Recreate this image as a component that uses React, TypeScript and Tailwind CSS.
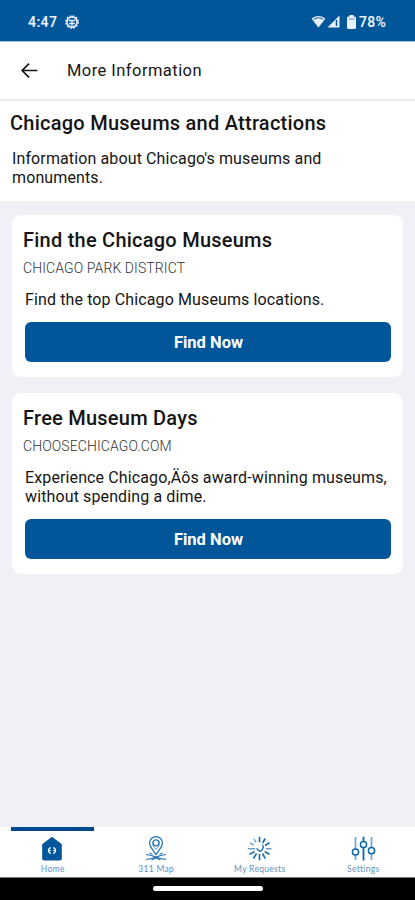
import React from "react";

interface Resource {
  title: string;
  source: string;
  description: string;
}

const RESOURCES: Resource[] = [
  {
    title: "Find the Chicago Museums",
    source: "CHICAGO PARK DISTRICT",
    description: "Find the top Chicago Museums locations.",
  },
  {
    title: "Free Museum Days",
    source: "CHOOSECHICAGO.COM",
    description:
      "Experience Chicago,Äôs award-winning museums, without spending a dime.",
  },
];

function StatusBar() {
  return (
    <div className="flex h-[42px] shrink-0 items-center border-b border-[#a9c3dc] bg-[#005699] pt-[2px] pr-[28px] pl-[28px] text-[14px] leading-none font-semibold text-[#e8f0fb]">
      <span className="w-[29px] tracking-[0.4px] whitespace-nowrap">4:47</span>
      <svg className="ml-2" width="14" height="14" viewBox="0 0 14 14" fill="none" stroke="currentColor">
        <circle cx="7" cy="7" r="5.2" strokeWidth="1.7" />
        <circle cx="7" cy="7" r="6.3" strokeWidth="1.1" strokeDasharray="1.8 1.5" />
        <path d="M3.5 5.5h7M4 8.5h6M7 5.5v6" strokeWidth="1.3" />
      </svg>
      <div className="ml-auto flex items-center">
        <svg width="15" height="13" viewBox="0 0 15 13" fill="none">
          <path d="M.6 3.7C4.5.1 10.5.1 14.4 3.7L7.5 12.4Z" fill="currentColor" />
          <path d="M2.6 4.5c3-2.2 6.8-2.2 9.8 0" stroke="#005699" strokeWidth="1" />
        </svg>
        <svg className="ml-px" width="13" height="13" viewBox="0 0 13 13">
          <path d="M12.5.5v12H.5Z" fill="currentColor" />
          <path d="M9.5 5v6" stroke="#005699" strokeWidth="1.5" />
        </svg>
        <svg className="ml-[7px]" width="9" height="14" viewBox="0 0 9 14">
          <path d="M2.5 0h4v1.5h1A1.5 1.5 0 0 1 9 3v9.5A1.5 1.5 0 0 1 7.5 14h-6A1.5 1.5 0 0 1 0 12.5V3a1.5 1.5 0 0 1 1.5-1.5h1Z" fill="currentColor" />
          <path d="M1.5 4h6" stroke="#5a92c2" strokeWidth="1" />
        </svg>
        <span className="ml-[3px] w-[28px] tracking-[0.2px] whitespace-nowrap">78%</span>
      </div>
    </div>
  );
}

function ResourceCard({ title, source, description }: Resource) {
  return (
    <section className="rounded-[9px] bg-white pt-[13px] pr-3 pb-[15px] pl-[13px]">
      <h2 className="-ml-[2px] text-[20px] leading-6 font-medium tracking-[0.24px]">{title}</h2>
      <p className="-ml-[2px] pt-[7px] text-[14px] leading-[18px] font-light tracking-[0.1px] text-[#333]">
        {source}
      </p>
      <p className="pt-[13px] text-[16px] leading-[19.5px] tracking-[0.12px]">{description}</p>
      <button
        type="button"
        className="mt-[12.5px] h-10 w-full rounded-[6px] bg-[#005699] pt-[3px] pl-px text-[16.5px] leading-none font-bold text-white"
      >
        Find Now
      </button>
    </section>
  );
}

function HomeIcon() {
  return (
    <svg width="22" height="25" viewBox="0 0 22 25" fill="none">
      <path d="M11 .7 20.8 8.2V22.5a2 2 0 0 1-2 2H3.2a2 2 0 0 1-2-2V8.2Z" fill="#00569b" />
      <path d="M9.8 11.600a3 3 0 0 0 0 5.800M12.200 11.600a3 3 0 0 1 0 5.800" stroke="#e5f1fb" strokeWidth="1.500" />
      <path d="M7.500 14.500h2.500M12 14.500h2.500" stroke="#e5f1fb" strokeWidth=".9" />
    </svg>
  );
}

function MapIcon() {
  return (
    <svg width="22" height="25" viewBox="0 0 22 25" fill="none" stroke="#2676b5" strokeWidth="1.3">
      <path d="M11 18.5C8 14 4.6 11 4.6 7a6.4 6.4 0 0 1 12.8 0c0 4-3.4 7-6.4 11.5Z" />
      <circle cx="11" cy="6.8" r="3" />
      <path d="M8 5v5l3 3.5 3-3.5V5" strokeWidth=".7" />
      <path d="M1 18.5c4 .2 6 1 10 2.5s6 2.2 10 2.3M1 23.5c4-.3 6-1 10-2.5s6-2.3 10-2.5M4.5 17l3 1.2M17.5 17l-3 1.2M6.5 24l4.5-2 4.5 2" strokeWidth="1.2" />
    </svg>
  );
}

function RequestsIcon() {
  return (
    <svg width="25" height="25" viewBox="0 0 25 25" fill="none" stroke="#166cb0" strokeWidth="1.6">
      <path d="M12.5 .8v5.5M18.2 2.5l-2.5 4.500M22.500 6.800l-4.500 2.700M17.700 15.500l4.800 2.800M15.500 17.500l2.800 5.200M12.500 18v6.300M9.500 17.500 6.500 22.700M7.500 15.500l-5 2.900" />
      <path d="M19 12.800h5.500M.8 12.800h7.400M2.800 6.800l4 2.400M7 2.800l2 3.700" stroke="#6b9fcb" strokeWidth="1.400" />
      <path d="M15.500 8.500c2 3-.3 6.500-3.500 7M9.500 12.500l3 2.500" strokeWidth="1.300" />
    </svg>
  );
}

function SettingsIcon() {
  return (
    <svg width="25" height="25" viewBox="0 0 25 25" fill="none" stroke="#0d67ad" strokeWidth="1.5">
      <path d="M4.5 1v12M4.5 19v5M20.5 1v10.5M20.5 18v6" stroke="#7ba9d1" strokeWidth="1.8" />
      <path d="M12.5 .8v4.7M12.5 12v12.5" strokeWidth="1.8" />
      <circle cx="4.5" cy="16" r="3.1" />
      <circle cx="12.5" cy="8.5" r="3.1" />
      <circle cx="20.5" cy="14.7" r="3.1" />
    </svg>
  );
}

const TABS = [
  { label: "Home", Icon: HomeIcon },
  { label: "311 Map", Icon: MapIcon },
  { label: "My Requests", Icon: RequestsIcon },
  { label: "Settings", Icon: SettingsIcon },
];

function TabBar() {
  return (
    <nav className="grid h-[50px] shrink-0 grid-cols-4 bg-white pl-px">
      {TABS.map(({ label, Icon }, index) => (
        <button key={label} type="button" className="flex flex-col items-center">
          <span className={index === 0 ? "h-1 w-[83px] bg-[#00498e]" : "h-1 w-[83px]"} />
          <span className={index === 0 ? "mt-[5px] mr-px" : "mt-[5px]"}>
            <Icon />
          </span>
          <span className="mt-[3px] font-['Lato','Roboto',sans-serif] text-[8.5px] leading-[10px] tracking-[0.3px] whitespace-nowrap text-[#5e92c4]">
            {label}
          </span>
        </button>
      ))}
    </nav>
  );
}

export default function App() {
  return (
    <div className="flex h-[900px] w-[415px] flex-col overflow-hidden bg-[#f1f0f6] font-['Roboto',sans-serif] text-[#151515]">
      <StatusBar />
      <header className="flex h-[59px] shrink-0 items-center border-b-2 border-[#ececec] bg-white pt-px pl-[21px]">
        <svg width="17" height="16" viewBox="0 0 17 16" fill="none" stroke="#151515" strokeWidth="1.7">
          <path d="M16.5 7.5H1.5M8 .7 1.2 7.5 8 14.3" />
        </svg>
        <h1 className="ml-[29px] pt-px text-[16.5px] tracking-[0.45px]">More Information</h1>
      </header>
      <div className="h-[100px] shrink-0 bg-white pt-[10px] pl-[12px]">
        <h2 className="-ml-[2px] text-[20px] leading-6 font-medium tracking-[0.25px]">
          Chicago Museums and Attractions
        </h2>
        <p className="w-[340px] pt-[13.5px] text-[16px] leading-[19.5px] tracking-[0.12px]">
          Information about Chicago's museums and monuments.
        </p>
      </div>
      <main className="flex flex-1 flex-col gap-[15.5px] px-3 pt-[14px]">
        {RESOURCES.map((resource) => (
          <ResourceCard key={resource.title} {...resource} />
        ))}
      </main>
      <TabBar />
      <div className="flex h-[23px] shrink-0 justify-center border-t border-[#777] bg-black pt-2">
        <div className="h-[5px] w-[110px] rounded-full bg-white" />
      </div>
    </div>
  );
}
